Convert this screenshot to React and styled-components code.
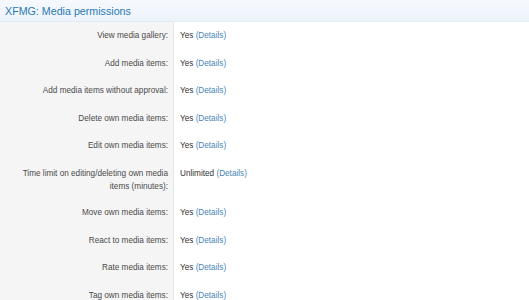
import React from 'react'
import styled, { createGlobalStyle } from 'styled-components';

const GlobalStyle = createGlobalStyle`
    html, body {
        margin: 0;
        padding: 0;
        background: #fff;
        font-family: 'Liberation Sans', Arial, sans-serif;
    }
`;

const rows = [
    { label: 'View media gallery:', value: 'Yes' },
    { label: 'Add media items:', value: 'Yes' },
    { label: 'Add media items without approval:', value: 'Yes' },
    { label: 'Delete own media items:', value: 'Yes' },
    { label: 'Edit own media items:', value: 'Yes' },
    { label: 'Time limit on editing/deleting own media items (minutes):', value: 'Unlimited', tall: true },
    { label: 'Move own media items:', value: 'Yes' },
    { label: 'React to media items:', value: 'Yes' },
    { label: 'Rate media items:', value: 'Yes' },
    { label: 'Tag own media items:', value: 'Yes' },
]

function App() {
    return (
        <>
            <GlobalStyle />
            <Block>
                <Header>XFMG: Media permissions</Header>
                {rows.map((r, i) => (
                    <Row key={i} $tall={r.tall}>
                        <Label>{r.label}</Label>
                        <Value>
                            {r.value} <Details>(Details)</Details>
                        </Value>
                    </Row>
                ))}
            </Block>
        </>
    )
}

const Block = styled.div`
    width: 529px;
    height: 300px;
    overflow: hidden;
`;

const Header = styled.h3`
    margin: 0;
    height: 22px;
    box-sizing: border-box;
    padding: 4px 5px 0;
    font-size: 10.7px;
    line-height: 14px;
    font-weight: normal;
    color: #2b79b3;
    background: linear-gradient(to bottom, #f6f9fd, #ecf3fb);
    border-bottom: 1px solid #e3ebf4;
`;

const Row = styled.div`
    display: grid;
    grid-template-columns: 174px 1fr;
    min-height: ${p => p.$tall ? '39px' : '27.6px'};
`;

const Label = styled.div`
    background: #f5f5f5;
    border-right: 1px solid #e6e6e6;
    padding: 8px 5px 0 8px;
    text-align: right;
    font-size: 8.2px;
    line-height: 12.8px;
    color: #4a4a4a;
`;

const Value = styled.div`
    padding: 8px 6px 0 6px;
    font-size: 8.2px;
    line-height: 12.8px;
    color: #333;
`;

const Details = styled.span`
    color: #4785b8;
`;

export default App;
